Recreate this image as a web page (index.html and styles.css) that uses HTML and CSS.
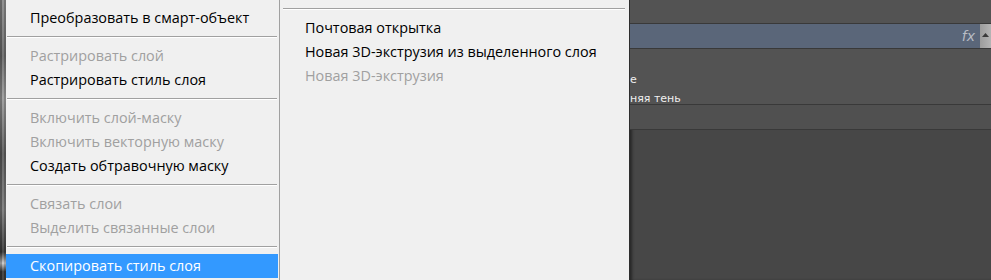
FILE: index.html
```html
<!DOCTYPE html>
<html lang="ru">
<head>
<meta charset="utf-8">
<title>Меню слоя</title>
<link rel="stylesheet" href="styles.css">
</head>
<body>
<div class="screen">
  <div class="strip"></div>
  <ul class="menu">
    <li class="item">Преобразовать в смарт-объект</li>
    <li class="sep"></li>
    <li class="item off">Растрировать слой</li>
    <li class="item">Растрировать стиль слоя</li>
    <li class="sep"></li>
    <li class="item off">Включить слой-маску</li>
    <li class="item off">Включить векторную маску</li>
    <li class="item">Создать обтравочную маску</li>
    <li class="sep"></li>
    <li class="item off">Связать слои</li>
    <li class="item off">Выделить связанные слои</li>
    <li class="sep"></li>
    <li class="item hot">Скопировать стиль слоя</li>
  </ul>
  <ul class="menu sub">
    <li class="sep"></li>
    <li class="item">Почтовая открытка</li>
    <li class="item">Новая 3D-экструзия из выделенного слоя</li>
    <li class="item off">Новая 3D-экструзия</li>
  </ul>
  <div class="panel">
    <div class="prow top"></div>
    <div class="prow layer">
      <span class="fx">fx</span>
      <span class="scroll"><svg width="7" height="4" viewBox="0 0 7 4"><path d="M0 4 L3.5 0 L7 4 Z" fill="#3a3a3a"/></svg></span>
    </div>
    <div class="prow effects">
      <span class="eff">е</span>
      <span class="eff">няя тень</span>
    </div>
    <div class="prow plain"></div>
    <div class="prow rest"></div>
  </div>
</div>
</body>
</html>
```
FILE: styles.css
```css
html, body {
  margin: 0;
  padding: 0;
  background: #474747;
}
.screen {
  width: 991px;
  height: 280px;
  overflow: hidden;
  display: flex;
  font-family: "Open Sans", "Noto Sans", sans-serif;
  font-size: 14.4px;
}
.strip {
  width: 6px;
  flex: none;
  background:
    linear-gradient(90deg, rgba(0,0,0,0.25) 0 2px, rgba(255,255,255,0.08) 2px 4px, rgba(0,0,0,0.15) 4px 6px),
    linear-gradient(180deg, #8a8a8a 0%, #6a6a6a 20%, #9a9a9a 35%, #5c5c5c 55%, #7a7a7a 75%, #3a3a3a 90%, #c8c8c8 94%, #3a3a3a 97%);
}
.menu {
  list-style: none;
  margin: 0;
  padding: 6px 0 0 0;
  width: 273px;
  flex: none;
  background: #f0f0f0;
  border-right: 1px solid #a0a0a0;
}
.menu.sub {
  width: 349px;
  padding-top: 2px;
  border-right: 1px solid #2e2e2e;
}
.item {
  height: 24px;
  line-height: 24px;
  padding-left: 24px;
  margin-right: 1px;
  color: #000;
  white-space: nowrap;
}
.sub .item {
  padding-left: 25px;
}
.item.off {
  color: #a0a0a0;
}
.item.hot {
  background: #3399ff;
  color: #fff;
}
.sep {
  height: 14px;
  box-sizing: border-box;
  padding-top: 6px;
  margin: 0 2px 0 1px;
}
.sep::before {
  content: "";
  display: block;
  height: 1px;
  background: #a0a0a0;
  border-bottom: 1px solid #ffffff;
}
.sub .sep {
  margin: 0 4px 0 3px;
}
.panel {
  flex: 1;
  display: flex;
  flex-direction: column;
  background: #474747;
  box-shadow: inset 3px 0 3px -1px rgba(0,0,0,0.45);
}
.prow {
  flex: none;
  box-sizing: border-box;
  border-bottom: 1px solid #393939;
  background: #535353;
}
.prow.top { height: 24px; }
.prow.layer {
  height: 25px;
  background: #5a6679;
  display: flex;
  justify-content: flex-end;
  align-items: stretch;
}
.fx {
  font-family: "DejaVu Sans", sans-serif;
  font-style: italic;
  color: #b8bcc4;
  font-size: 14px;
  line-height: 24px;
  margin-right: 5px;
}
.scroll {
  width: 11px;
  background: linear-gradient(90deg, #9c9c9c, #b4b4b4);
  display: flex;
  justify-content: center;
  padding-top: 9px;
  box-sizing: border-box;
}
.scroll svg { display: block; }
.prow.effects {
  height: 56px;
  padding-top: 21px;
  display: flex;
  flex-direction: column;
}
.eff {
  font-family: "DejaVu Sans", sans-serif;
  font-size: 11px;
  line-height: 19px;
  height: 19px;
  color: #f0f0f0;
  white-space: nowrap;
}
.prow.plain { height: 25px; background: #505050; }
.prow.rest { flex: 1; border-bottom: none; background: transparent; }
```
